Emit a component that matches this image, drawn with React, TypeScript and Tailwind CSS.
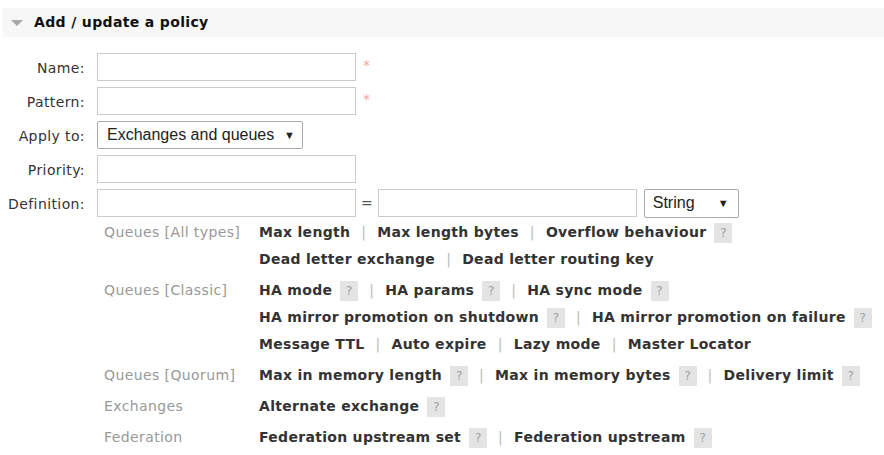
import React from "react";

type Item = { name: string; help?: boolean };

const groups: { label: string; lines: Item[][] }[] = [
  {
    label: "Queues [All types]",
    lines: [
      [{ name: "Max length" }, { name: "Max length bytes" }, { name: "Overflow behaviour", help: true }],
      [{ name: "Dead letter exchange" }, { name: "Dead letter routing key" }],
    ],
  },
  {
    label: "Queues [Classic]",
    lines: [
      [{ name: "HA mode", help: true }, { name: "HA params", help: true }, { name: "HA sync mode", help: true }],
      [{ name: "HA mirror promotion on shutdown", help: true }, { name: "HA mirror promotion on failure", help: true }],
      [{ name: "Message TTL" }, { name: "Auto expire" }, { name: "Lazy mode" }, { name: "Master Locator" }],
    ],
  },
  {
    label: "Queues [Quorum]",
    lines: [
      [{ name: "Max in memory length", help: true }, { name: "Max in memory bytes", help: true }, { name: "Delivery limit", help: true }],
    ],
  },
  { label: "Exchanges", lines: [[{ name: "Alternate exchange", help: true }]] },
  {
    label: "Federation",
    lines: [[{ name: "Federation upstream set", help: true }, { name: "Federation upstream", help: true }]],
  },
];

const Help = () => (
  <span className="ml-[8px] inline-flex h-[20px] w-[18px] items-center justify-center bg-[#e4e4e4] text-[12px] font-normal tracking-normal text-[#a0a0a0]">
    ?
  </span>
);

const TextBox = () => <div className="h-[28px] w-[259px] border border-[#cccccc] bg-white" />;

const Field = ({ label, children }: { label: string; children: React.ReactNode }) => (
  <div className="flex h-[34px] items-center">
    <div className="mt-[2px] w-[85px] text-right text-[14px] tracking-[0.4px] text-[#333]">{label}</div>
    <div className="ml-[12px] flex items-center">{children}</div>
  </div>
);

const Req = () => <span className="ml-[7px] -mt-[3px] text-[14px] text-[#f4a0a0]">*</span>;

export default function App() {
  return (
    <div className="min-h-[455px] bg-white pt-[8px] font-['DejaVu_Sans',Verdana,sans-serif]">
      <div className="ml-[3px] flex h-[29px] items-center bg-[#f7f7f7]">
        <svg width="12" height="8" viewBox="0 0 12 8" className="ml-[8px]">
          <path d="M0 1 L12 1 L6 7 Z" fill="#a8a8a8" />
        </svg>
        <span className="ml-[11px] text-[14px] font-bold tracking-[0.35px] text-[#111]">Add / update a policy</span>
      </div>

      <div className="mt-[13px]">
        <Field label="Name:">
          <TextBox />
          <Req />
        </Field>
        <Field label="Pattern:">
          <TextBox />
          <Req />
        </Field>
        <Field label="Apply to:">
          <div className="flex h-[28px] w-[206px] items-center justify-between rounded-[2px] border border-[#aaaaaa] bg-white pl-[9px] pr-[7px] font-['Liberation_Sans',Arial,sans-serif] text-[16px] text-[#222]">
            <span>Exchanges and queues</span>
            <span className="text-[11px]">▼</span>
          </div>
        </Field>
        <Field label="Priority:">
          <TextBox />
        </Field>
        <Field label="Definition:">
          <TextBox />
          <span className="ml-[5px] mr-[5px] text-[14px] text-[#555]">=</span>
          <TextBox />
          <div className="ml-[7px] flex h-[29px] w-[95px] items-center justify-between rounded-[2px] border border-[#aaaaaa] bg-white pl-[8px] pr-[9px] font-['Liberation_Sans',Arial,sans-serif] text-[16px] text-[#222]">
            <span>String</span>
            <span className="text-[11px]">▼</span>
          </div>
        </Field>
      </div>

      <div className="-mt-[1px]">
        {groups.map((g) => (
          <div key={g.label} className="flex pb-[4px]">
            <div className="ml-[104px] w-[155px] text-[14px] leading-[27px] tracking-[0.4px] text-[#999]">{g.label}</div>
            <div>
              {g.lines.map((line, i) => (
                <div key={i} className="flex h-[27px] items-center text-[14px] font-bold tracking-[0.3px] text-[#333]">
                  {line.map((it, j) => (
                    <React.Fragment key={it.name}>
                      {j > 0 && <span className="mx-[11px] font-normal text-[#bbb]">|</span>}
                      <span>{it.name}</span>
                      {it.help && <Help />}
                    </React.Fragment>
                  ))}
                </div>
              ))}
            </div>
          </div>
        ))}
      </div>
    </div>
  );
}
